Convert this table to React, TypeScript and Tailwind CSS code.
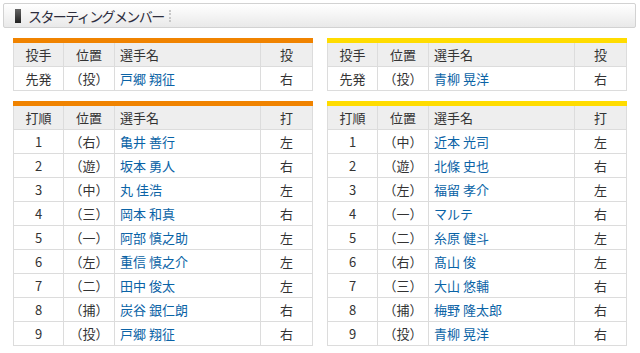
import React from "react";

type Row = [string, string, string, string];

const pitchersG: Row[] = [["先発", "（投）", "戸郷 翔征", "右"]];
const pitchersT: Row[] = [["先発", "（投）", "青柳 晃洋", "右"]];

const battersG: Row[] = [
  ["1", "（右）", "亀井 善行", "左"],
  ["2", "（遊）", "坂本 勇人", "右"],
  ["3", "（中）", "丸 佳浩", "左"],
  ["4", "（三）", "岡本 和真", "右"],
  ["5", "（一）", "阿部 慎之助", "左"],
  ["6", "（左）", "重信 慎之介", "左"],
  ["7", "（二）", "田中 俊太", "左"],
  ["8", "（捕）", "炭谷 銀仁朗", "右"],
  ["9", "（投）", "戸郷 翔征", "右"],
];
const battersT: Row[] = [
  ["1", "（中）", "近本 光司", "左"],
  ["2", "（遊）", "北條 史也", "右"],
  ["3", "（左）", "福留 孝介", "左"],
  ["4", "（一）", "マルテ", "右"],
  ["5", "（二）", "糸原 健斗", "左"],
  ["6", "（右）", "髙山 俊", "左"],
  ["7", "（三）", "大山 悠輔", "右"],
  ["8", "（捕）", "梅野 隆太郎", "右"],
  ["9", "（投）", "青柳 晃洋", "右"],
];

function Table({
  color,
  head,
  rows,
}: {
  color: "orange" | "yellow";
  head: Row;
  rows: Row[];
}) {
  return (
    <div className="w-[300px]">
      <div className={color === "orange" ? "h-[5px] bg-[#f08300]" : "h-[5px] bg-[#ffdc00]"} />
      <div className="flex h-[24px] border-b border-[#dcdcdc] bg-[#eeeeee] leading-[23px]">
        <div className="w-[50px] border-l border-[#dcdcdc] text-center">{head[0]}</div>
        <div className="w-[51px] border-l border-[#dcdcdc] text-center">{head[1]}</div>
        <div className="w-[146px] border-l border-[#dcdcdc] pl-[5px]">{head[2]}</div>
        <div className="w-[53px] border-x border-[#dcdcdc] text-center">{head[3]}</div>
      </div>
      {rows.map((r, i) => (
        <div key={i} className="flex h-[24px] border-b border-[#dcdcdc] bg-white leading-[23px]">
          <div className="w-[50px] border-l border-[#dcdcdc] text-center">{r[0]}</div>
          <div className="w-[51px] border-l border-[#dcdcdc] text-center">{r[1]}</div>
          <div className="w-[146px] border-l border-[#dcdcdc] pl-[5px] text-[#0a63a6]">{r[2]}</div>
          <div className="w-[53px] border-x border-[#dcdcdc] text-center">{r[3]}</div>
        </div>
      ))}
    </div>
  );
}

export default function App() {
  return (
    <div
      className="w-[640px] h-[353px] bg-white text-[13px] text-[#333333] overflow-hidden"
      style={{ fontFamily: '"Noto Sans CJK JP", "Noto Sans", sans-serif' }}
    >
      <div className="pt-[3px] pl-[3px] pr-[4px]">
        <div className="flex h-[25px] items-center rounded-[2px] border border-[#d2d2d2] bg-gradient-to-b from-[#ffffff] to-[#e9e9e9]">
          <div className="ml-[11px] h-[14px] w-[6px] bg-gradient-to-b from-[#666666] to-[#222222]" />
          <div className="ml-[7px] text-[14px] leading-[14px] tracking-[-1.6px] text-[#2d2d3d]">
            スターティングメンバー
          </div>
          <div className="ml-[5px] h-[12px] border-l-2 border-dotted border-[#c8c8c8]" />
        </div>
      </div>
      <div className="mt-[10px] flex gap-[14px] px-[13px]">
        <Table color="orange" head={["投手", "位置", "選手名", "投"]} rows={pitchersG} />
        <Table color="yellow" head={["投手", "位置", "選手名", "投"]} rows={pitchersT} />
      </div>
      <div className="mt-[10px] flex gap-[14px] px-[13px]">
        <Table color="orange" head={["打順", "位置", "選手名", "打"]} rows={battersG} />
        <Table color="yellow" head={["打順", "位置", "選手名", "打"]} rows={battersT} />
      </div>
    </div>
  );
}
